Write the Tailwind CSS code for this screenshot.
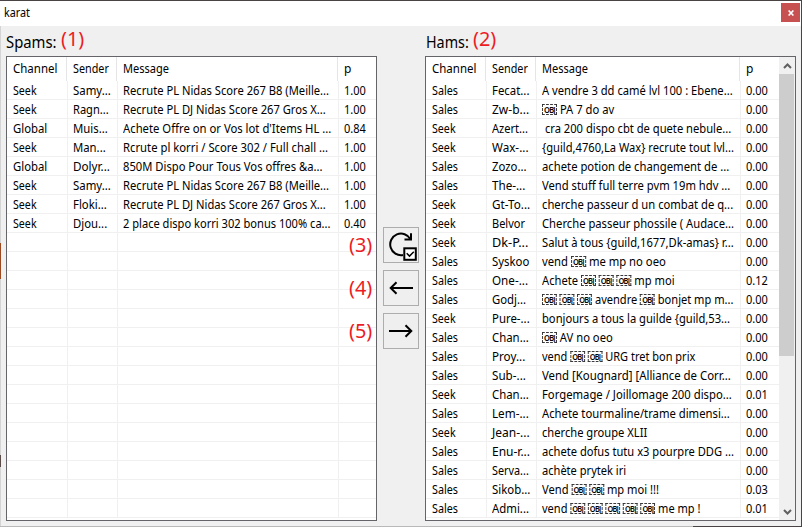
<!DOCTYPE html>
<html lang="fr">
<head>
<meta charset="utf-8">
<title>karat</title>
<script src="https://cdn.jsdelivr.net/npm/@tailwindcss/browser@4"></script>
</head>
<body class="w-[802px] h-[527px] overflow-hidden bg-[#f0f0f0] text-black font-['Noto_Sans',sans-serif] text-[12px] leading-[20px]">
<div class="relative flex h-[527px] w-[802px] flex-col border-t border-r border-[#4a4343]">
  <header class="flex h-[25px] shrink-0 items-start justify-between bg-white pl-1 pr-px">
    <span class="mt-[2px] inline-block origin-left whitespace-nowrap" data-w="26">karat</span>
    <button class="mt-[2px] flex size-[19px] items-center justify-center bg-[#c75050]" aria-label="Fermer">
      <svg class="h-[6px] w-[6px]" viewBox="0 0 6 6" stroke="#fff" stroke-width="1.6"><path d="M.6 .5 5.4 5.5M5.4 .5.6 5.5"/></svg>
    </button>
  </header>
  <main class="flex h-[500px] shrink-0 pl-[6px]">
    <section class="w-[371px]">
      <h2 class="flex h-[30px] pt-[5px] text-[16px] leading-[22px]"><span class="inline-block origin-left whitespace-nowrap" data-w="51">Spams:</span></h2>
      <div id="spams" class="h-[465px] w-[371px] overflow-hidden border border-[#646469] bg-white"></div>
    </section>
    <div class="flex w-[48px] flex-col gap-[7px] pl-[6px] pt-[201px]">
      <button class="flex size-[36px] items-center justify-center border border-[#adadad] bg-[#efefef]" aria-label="Actualiser">
        <svg class="size-[34px] shrink-0" viewBox="0 0 34 34" fill="none" stroke="#000" stroke-width="2"><path d="M19 27A10.8 10.8 0 1 1 26.5 11.2"/><path d="M27 5.3v6.2h-6.5"/><rect x="20.3" y="20.3" width="11.5" height="11.5" fill="#fff"/><path d="m22.7 25.3 2.8 2.8 4.3-4.3" stroke-width="1.5"/></svg>
      </button>
      <button class="flex size-[36px] items-center justify-center border border-[#adadad] bg-[#efefef]" aria-label="Vers spams">
        <svg class="size-[34px] shrink-0" viewBox="0 0 34 34" fill="none" stroke="#000" stroke-width="2"><path d="M29 17H7M12.5 11.2 6.7 17l5.8 5.8"/></svg>
      </button>
      <button class="flex size-[36px] items-center justify-center border border-[#adadad] bg-[#efefef]" aria-label="Vers hams">
        <svg class="size-[34px] shrink-0" viewBox="0 0 34 34" fill="none" stroke="#000" stroke-width="2"><path d="M5 17h22M21.5 11.2l5.8 5.8-5.8 5.8"/></svg>
      </button>
    </div>
    <section class="w-[371px]">
      <h2 class="flex h-[30px] pt-[5px] pl-px text-[16px] leading-[22px]"><span class="inline-block origin-left whitespace-nowrap" data-w="43">Hams:</span></h2>
      <div class="flex h-[465px] w-[371px] overflow-hidden border border-[#646469] bg-white">
        <div id="hams" class="w-[353px]"></div>
        <div class="flex w-[16px] flex-col bg-[#f0f0f0]">
          <div class="flex h-[17px] items-center justify-center"><svg class="h-[6px] w-[9px]" viewBox="0 0 9 6" fill="none" stroke="#606060" stroke-width="2"><path d="M1 5 4.5 1.5 8 5"/></svg></div>
          <div class="h-[282px] w-[15px] bg-[#cdcdcd]"></div>
          <div class="flex-1"></div>
          <div class="flex h-[17px] items-center justify-center"><svg class="h-[6px] w-[9px]" viewBox="0 0 9 6" fill="none" stroke="#606060" stroke-width="2"><path d="M1 1 4.5 4.5 8 1"/></svg></div>
        </div>
      </div>
    </section>
  </main>
  <!-- bottom window edge -->
  <footer class="absolute left-0 top-[525px] flex h-px w-[801px] bg-[#4a4343]"><div class="w-[693px] bg-[#b9b9b9]"></div></footer>
  <div class="absolute left-0 top-[25px] h-[500px] w-px bg-[#d4d4d4]"></div>
  <div class="absolute left-0 top-[242px] h-[36px] w-px bg-[#9a4a20]"></div>
  <div class="absolute left-0 top-[454px] h-[12px] w-px bg-[#5a4b48]"></div>
  <!-- numbered callouts -->
  <div class="text-[19px] leading-[24px] text-[#ed1c24]">
    <span class="absolute left-[61px] top-[26px] inline-block origin-left" data-w="23">(1)</span>
    <span class="absolute left-[473px] top-[26px] inline-block origin-left" data-w="23">(2)</span>
    <span class="absolute left-[349px] top-[232px] inline-block origin-left" data-w="23">(3)</span>
    <span class="absolute left-[349px] top-[275px] inline-block origin-left" data-w="23">(4)</span>
    <span class="absolute left-[349px] top-[318px] inline-block origin-left" data-w="23">(5)</span>
  </div>
</div>
<script>
// channel, sender, sender width, message, message width, p
const spams = [
  ["Seek","Samy...",38,"Recrute PL Nidas Score 267 B8 (Meille...",206,"1.00"],
  ["Seek","Ragn...",36,"Recrute PL DJ Nidas Score 267 Gros X...",203,"1.00"],
  ["Global","Muis...",35,"Achete Offre on or Vos lot d'Items HL ...",208,"0.84"],
  ["Seek","Man...",33,"Rcrute pl korri / Score 302 / Full chall ...",205,"1.00"],
  ["Global","Dolyr...",37,"850M Dispo Pour Tous Vos offres &a...",199,"1.00"],
  ["Seek","Samy...",38,"Recrute PL Nidas Score 267 B8 (Meille...",206,"1.00"],
  ["Seek","Floki...",34,"Recrute PL DJ Nidas Score 267 Gros X...",203,"1.00"],
  ["Seek","Djou...",34,"2 place dispo korri 302 bonus 100% ca...",208,"0.40"]
];
const hams = [
  ["Sales","Fecat...",37,"A vendre 3 dd camé lvl 100 : Ebene...",191,"0.00"],
  ["Sales","Zw-b...",37,"\uFFFC PA 7 do av",72,"0.00"],
  ["Seek","Azert...",36," cra 200 dispo cbt de quete nebule...",189,"0.00"],
  ["Seek","Wax-...",37,"{guild,4760,La Wax} recrute tout lvl...",192,"0.00"],
  ["Sales","Zozo...",35,"achete potion de changement de ...",187,"0.00"],
  ["Sales","The-...",33,"Vend stuff full terre pvm 19m hdv ...",188,"0.00"],
  ["Seek","Gt-To...",38,"cherche passeur d un combat de q...",191,"0.00"],
  ["Seek","Belvor",33,"Cherche passeur phossile ( Audace...",192,"0.00"],
  ["Seek","Dk-P...",36,"Salut à tous {guild,1677,Dk-amas} r...",192,"0.00"],
  ["Sales","Syskoo",37,"vend \uFFFC me mp no oeo",124,"0.00"],
  ["Sales","One-...",36,"Achete \uFFFC \uFFFC \uFFFC mp moi",133,"0.12"],
  ["Sales","Godj...",34,"\uFFFC \uFFFC \uFFFC avendre \uFFFC bonjet mp m...",191,"0.00"],
  ["Seek","Pure-...",38,"bonjours a tous la guilde {guild,53...",188,"0.00"],
  ["Sales","Chan...",37,"\uFFFC AV no oeo",71,"0.00"],
  ["Sales","Proy...",33,"vend \uFFFC \uFFFC URG tret bon prix",153,"0.00"],
  ["Sales","Sub-...",34,"Vend [Kougnard] [Alliance de Corr...",189,"0.00"],
  ["Seek","Chan...",37,"Forgemage / Joillomage 200 dispo...",190,"0.01"],
  ["Sales","Lem-...",37,"Achete tourmaline/trame dimensi...",188,"0.00"],
  ["Seek","Jean-...",38,"cherche groupe XLII",105,"0.00"],
  ["Sales","Enu-r...",38,"achete dofus tutu x3 pourpre DDG ...",192,"0.00"],
  ["Sales","Serva...",37,"achète prytek iri",84,"0.00"],
  ["Sales","Sikob...",38,"Vend \uFFFC \uFFFC mp moi !!!",117,"0.03"],
  ["Sales","Admi...",37,"vend \uFFFC \uFFFC \uFFFC \uFFFC \uFFFC me mp !",158,"0.01"]
];
const obj = '<span class="inline-block h-[11px] w-[16px] overflow-hidden border border-dashed border-[#333] align-[-1px] text-center text-[8px] font-semibold leading-[9px] tracking-[-0.8px]">OBJ</span>';
const esc = s => s.replace(/&/g, "&amp;").replace(/\uFFFC/g, obj);
const t = (s, w) => `<span class="inline-block origin-left whitespace-pre align-top" data-w="${w}">${esc(s)}</span>`;
const chW = { Seek: 24, Global: 34, Sales: 26 };
function fill(id, data, grid, head) {
  let h = `<div class="grid h-[24px] ${head} leading-[24px]">
    <div class="border-r border-[#e5e5e5] pl-[6px]">${t("Channel", 44)}</div>
    <div class="border-r border-[#e5e5e5] pl-[6px]">${t("Sender", 36)}</div>
    <div class="border-r border-[#e5e5e5] pl-[6px]">${t("Message", 46)}</div>
    <div class="pl-[6px]">${t("p", 7)}</div></div>`;
  for (let i = 0; i < 23; i++) {
    const r = data[i];
    h += `<div class="grid h-[19px] border-b border-[#f0f0f0] ${grid}">
      <div class="h-[18px] border-r border-[#f0f0f0] pl-[6px]">${r ? t(r[0], chW[r[0]]) : ""}</div>
      <div class="h-[18px] border-r border-[#f0f0f0] pl-[5px]">${r ? t(r[1], r[2]) : ""}</div>
      <div class="h-[18px] border-r border-[#f0f0f0] pl-[5px]">${r ? t(r[3], r[4]) : ""}</div>
      <div class="h-[18px] pl-[5px]">${r ? t(r[5], 22) : ""}</div></div>`;
  }
  document.getElementById(id).innerHTML = h;
}
fill("spams", spams, "grid-cols-[61px_50px_221px_30px]", "grid-cols-[60px_50px_221px_31px]");
fill("hams", hams, "grid-cols-[61px_50px_204px_38px]", "grid-cols-[60px_50px_204px_39px]");
const fit = e => { if (e.offsetWidth) e.style.transform = `scaleX(${e.dataset.w / e.offsetWidth})`; };
const ro = new ResizeObserver(list => list.forEach(x => fit(x.target)));
document.querySelectorAll("[data-w]").forEach(e => { fit(e); ro.observe(e); });
addEventListener("load", () => document.querySelectorAll("[data-w]").forEach(fit));
</script>
</body>
</html>
